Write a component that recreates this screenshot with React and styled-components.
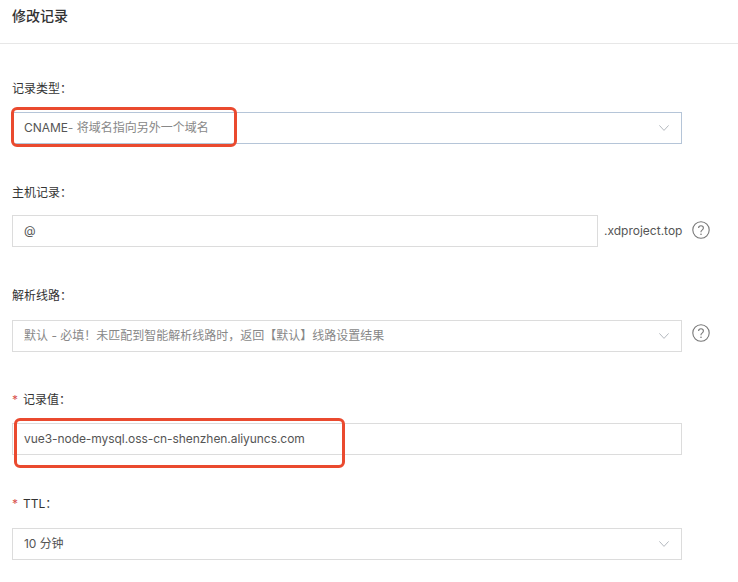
import React from "react"
import styled, { createGlobalStyle } from "styled-components"

const GlobalStyle = createGlobalStyle`
    html, body {
        margin: 0;
        height: 100%;
        overflow: hidden;
        background: #fff;
    }

    body {
        font-family: Inter, "Noto Sans CJK SC", sans-serif;
        color: #333;
    }
`

const Chevron = () => (
    <ChevronIcon viewBox="0 0 10 6" width="10" height="6">
        <path d="M.4.4L5 5.4 9.6.4" fill="none" stroke="#b4b9bf" strokeWidth="1" />
    </ChevronIcon>
)

const Help = ({ top }) => (
    <HelpIcon $top={top} viewBox="0 0 18 18" width="18" height="18">
        <circle cx="9" cy="9" r="8.2" fill="none" stroke="#777" strokeWidth="1.1" />
        <path
            d="M6.6 7.1c0-1.4 1-2.3 2.4-2.3s2.4.9 2.4 2.2c0 1.1-.6 1.6-1.3 2.1-.7.5-1.1.9-1.1 1.7v.4"
            fill="none"
            stroke="#777"
            strokeWidth="1.1"
        />
        <circle cx="9" cy="13.3" r=".8" fill="#777" />
    </HelpIcon>
)

const Select = ({ children, active }) => (
    <Box $active={active}>
        <Value>{children}</Value>
        <Chevron />
    </Box>
)

export default function App() {
    return (
        <Page>
            <GlobalStyle />
            <Header>
                <Title>修改记录</Title>
                <Close viewBox="0 0 12 12" width="12" height="12">
                    <path d="M1 1l10 10M11 1L1 11" stroke="#888" strokeWidth="1" fill="none" />
                </Close>
            </Header>
            <Form>
                <Field>
                    <Label $shift={1}>记录类型：</Label>
                    <Row>
                        <Select active>
                            CNAME<Muted>- 将域名指向另外一个域名</Muted>
                        </Select>
                        <Highlight $left={-1} $top={-5} $width={226} $height={40} />
                    </Row>
                </Field>
                <Field>
                    <Label $shift={1} $boxShift={-1}>主机记录：</Label>
                    <Row>
                        <Box $width="586px">
                            <Value>@</Value>
                        </Box>
                        <Suffix>.xdproject.top</Suffix>
                        <Help top={6} />
                    </Row>
                </Field>
                <Field>
                    <Label>解析线路：</Label>
                    <Row>
                        <Select>
                            <Muted>默认 - 必填！未匹配到智能解析线路时，返回【默认】线路设置结果</Muted>
                        </Select>
                        <Help top={4} />
                    </Row>
                </Field>
                <Field>
                    <Label $boxShift={-1}>
                        <Star>*</Star>记录值：
                    </Label>
                    <Row>
                        <Box>
                            <Value>vue3-node-mysql.oss-cn-shenzhen.aliyuncs.com</Value>
                        </Box>
                        <Highlight $left={2} $top={-5} $width={331} $height={50} />
                    </Row>
                </Field>
                <Field>
                    <Label>
                        <Star>*</Star>TTL：
                    </Label>
                    <Row>
                        <Select>10 分钟</Select>
                    </Row>
                </Field>
            </Form>
        </Page>
    )
}

const Page = styled.div`
    width: 738px;
    height: 582px;
    overflow: hidden;
`

const Header = styled.header`
    height: 44px;
    box-sizing: border-box;
    border-bottom: 1px solid #e7e7e7;
    padding: 0 0 0 12px;
    display: flex;
    align-items: flex-start;
    justify-content: space-between;
`

const Title = styled.h1`
    margin: 6px 0 0;
    font-size: 14px;
    line-height: 20px;
    font-weight: 500;
    color: #333;
`

const Close = styled.svg`
    margin: 11px -11px 0 0;
    flex: none;
`

const Form = styled.div`
    padding: 34px 0 0 12px;
    width: 726px;
    box-sizing: border-box;
`

const Field = styled.section`
    display: flow-root;
    height: 104px;
`

const Label = styled.label`
    display: block;
    height: 20px;
    margin-top: ${(p) => p.$shift || 0}px;
    margin-bottom: ${(p) => 14 - (p.$shift || 0) + (p.$boxShift || 0)}px;
    font-size: 12px;
    line-height: 20px;
    color: #333;
`

const Star = styled.span`
    color: #d9534f;
    margin-right: 5px;
`

const Row = styled.div`
    position: relative;
    display: flex;
    align-items: flex-start;
`

const Box = styled.div`
    width: ${(p) => p.$width || "670px"};
    height: 32px;
    box-sizing: border-box;
    flex: none;
    padding: 0 12px 0 11px;
    display: flex;
    align-items: center;
    justify-content: space-between;
    background: #fff;
    border: 1px solid ${(p) => (p.$active ? "#b5c5d8" : "#dcdcdc")};
`

const Value = styled.span`
    display: block;
    font-size: 12px;
    line-height: 16px;
    letter-spacing: -0.06px;
    color: #555;
    white-space: nowrap;
`

const Muted = styled.span`
    color: #888;
    letter-spacing: 0;
`

const ChevronIcon = styled.svg`
    flex: none;
`

const Suffix = styled.span`
    margin-left: 6px;
    font-size: 12px;
    line-height: 32px;
    color: #555;
    white-space: nowrap;
`

const HelpIcon = styled.svg`
    flex: none;
    margin: ${(p) => p.$top}px 0 0 10px;
`

const Highlight = styled.div`
    position: absolute;
    left: ${(p) => p.$left}px;
    top: ${(p) => p.$top}px;
    width: ${(p) => p.$width}px;
    height: ${(p) => p.$height}px;
    box-sizing: border-box;
    border: 3px solid #ea4a2f;
    border-radius: 6px;
`
